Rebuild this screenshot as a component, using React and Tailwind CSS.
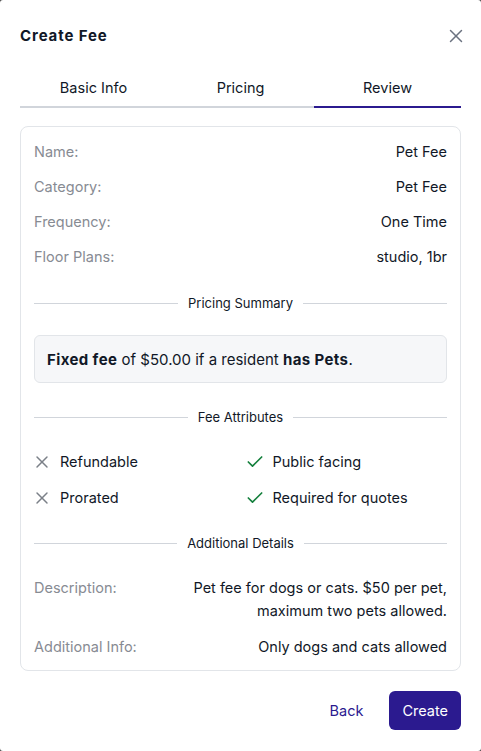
import React from 'react';
import { X, Check } from 'lucide-react';

const Row = ({ label, children }) => (
  <div className="flex justify-between gap-6 leading-6">
    <span className="text-[#878b93] shrink-0">{label}</span>
    <span className="text-[#111827] text-right">{children}</span>
  </div>
);

const Divider = ({ title }) => (
  <div className="flex items-center gap-[10px] text-[13px] leading-5 text-[#111827]">
    <div className="flex-1 h-px bg-[#d1d5db]" />
    <span>{title}</span>
    <div className="flex-1 h-px bg-[#d1d5db]" />
  </div>
);

const Attr = ({ ok, label }) => (
  <div className="flex items-center gap-2 leading-6">
    {ok ? (
      <Check className="w-5 h-5 -ml-[2px] text-[#15803d]" strokeWidth={2} />
    ) : (
      <X className="w-5 h-5 -ml-[2px] text-[#7b8088]" strokeWidth={1.75} />
    )}
    <span className="text-[#111827]">{label}</span>
  </div>
);

export default function App() {
  const tabs = ['Basic Info', 'Pricing', 'Review'];
  return (
    <div className="min-h-screen bg-[#4b4b4b]" style={{ fontFamily: 'Inter, "Noto Sans", sans-serif' }}>
      <div className="bg-white w-[481px] h-[751px] rounded-[3px] px-5 pt-[25px] flex flex-col text-[14.5px]">
        <div className="flex items-center justify-between h-[22px]">
          <h2 className="text-[15px] font-bold tracking-[0.9px] text-[#111827]">Create Fee</h2>
          <X className="w-[22px] h-[22px] text-[#6b7280] -mr-[6px]" strokeWidth={1.6} />
        </div>

        <div className="grid grid-cols-3 mt-[30px] border-b-2 border-[#d1d5db]">
          {tabs.map((t) => (
            <div
              key={t}
              className={
                t === 'Review'
                  ? 'text-center pb-[7px] -mb-[2px] border-b-2 border-[#2b1a8f] text-[#111827] leading-[22px]'
                  : 'text-center pb-[7px] text-[#111827] leading-[22px]'
              }
            >
              {t}
            </div>
          ))}
        </div>

        <div className="mt-[18px] border border-[#e2e5e9] rounded-lg px-[13px] pt-[13px] pb-[11px] flex flex-col">
          <div className="flex flex-col gap-[11px]">
            <Row label="Name:">Pet Fee</Row>
            <Row label="Category:">Pet Fee</Row>
            <Row label="Frequency:">One Time</Row>
            <Row label="Floor Plans:">studio, 1br</Row>
          </div>

          <div className="mt-[24px]">
            <Divider title="Pricing Summary" />
          </div>

          <div className="mt-[22px] bg-[#f6f7f9] border border-[#e2e5e9] rounded-md px-[12px] pt-[12px] pb-[10px] leading-6 text-[#111827] text-[15px]">
            <span className="font-bold tracking-[0.4px]">Fixed fee</span> of $50.00 if a resident{' '}
            <span className="font-bold tracking-[0.4px]">has Pets</span>.
          </div>

          <div className="mt-[24px]">
            <Divider title="Fee Attributes" />
          </div>

          <div className="grid grid-cols-2 gap-x-3 gap-y-3 mt-[23px]">
            <Attr label="Refundable" />
            <Attr ok label="Public facing" />
            <Attr label="Prorated" />
            <Attr ok label="Required for quotes" />
          </div>

          <div className="mt-[23px]">
            <Divider title="Additional Details" />
          </div>

          <div className="flex flex-col gap-[13px] mt-[23px]">
            <div className="flex justify-between gap-6">
              <span className="text-[#878b93] leading-6 shrink-0">Description:</span>
              <span className="text-[#111827] text-right leading-[23px] max-w-[260px]">
                Pet fee for dogs or cats. $50 per pet, maximum two pets allowed.
              </span>
            </div>
            <Row label="Additional Info:">Only dogs and cats allowed</Row>
          </div>
        </div>

        <div className="flex justify-end items-center gap-[8px] mt-[20px]">
          <button className="px-[18px] h-[39px] text-[#2b1a8f]">Back</button>
          <button className="px-[13px] h-[39px] rounded-md bg-[#2b1a8f] text-white">Create</button>
        </div>
      </div>
    </div>
  );
}
